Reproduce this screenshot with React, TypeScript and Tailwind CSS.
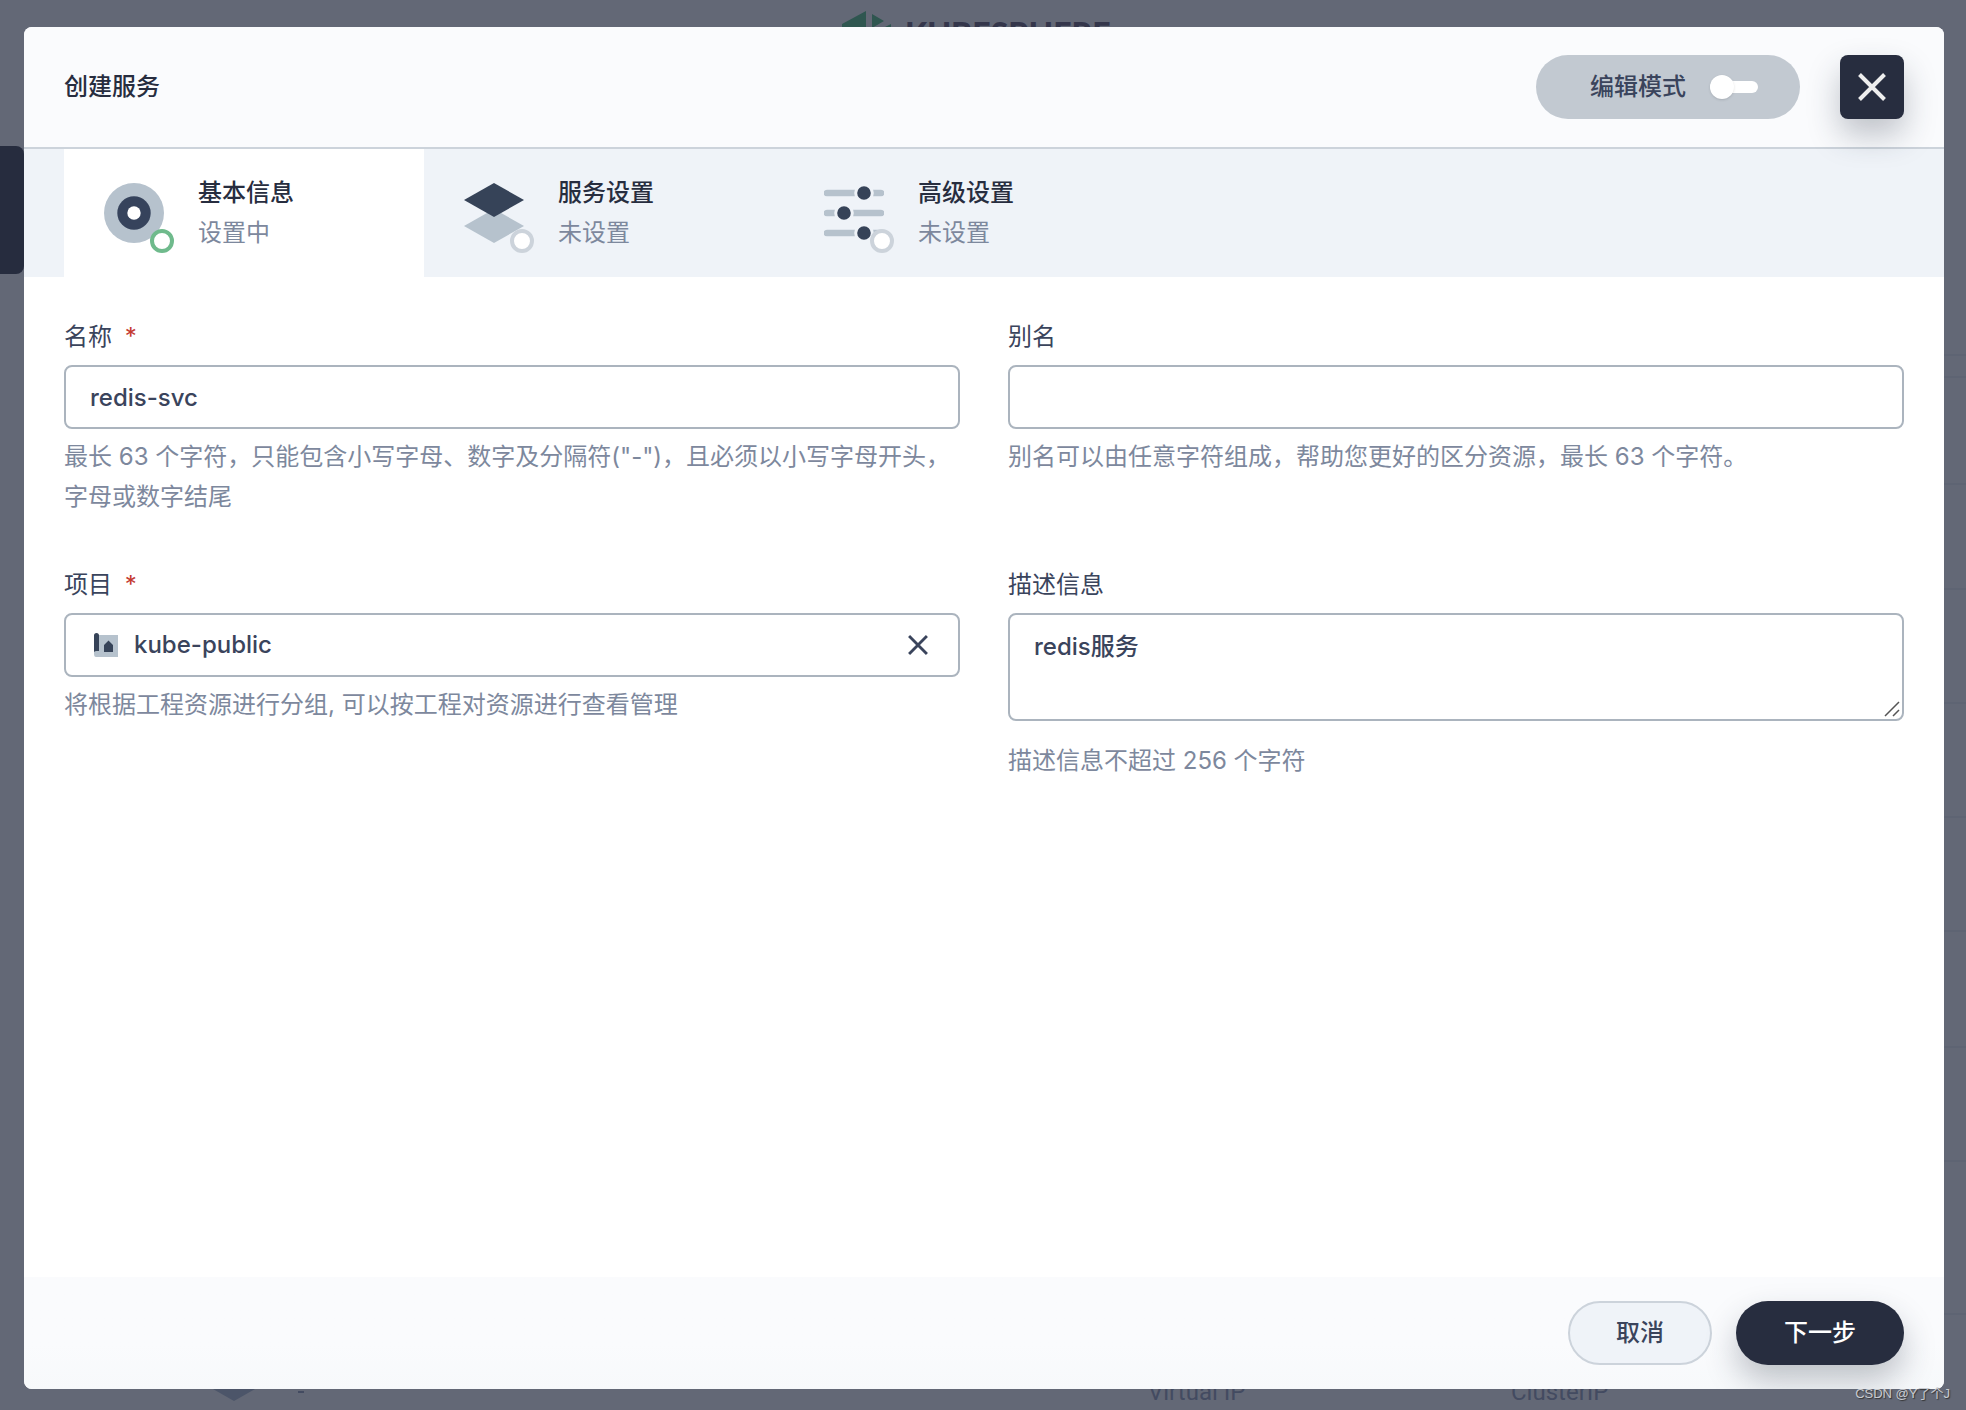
import { useState } from "react";

const steps = [
  { id: "basic", title: "基本信息", status: "设置中" },
  { id: "service", title: "服务设置", status: "未设置" },
  { id: "advanced", title: "高级设置", status: "未设置" },
];

const rows = [354, 376, 483, 588, 702, 816, 930, 1046, 1160, 1313];

function StepIcon({ id }: { id: string }) {
  if (id === "basic") {
    return (
      <svg viewBox="0 0 60 60" className="size-15">
        <circle cx="30" cy="30" r="30" fill="#b6c2cd" />
        <circle cx="30" cy="30" r="16.7" fill="#36435c" />
        <circle cx="30" cy="30" r="6.7" fill="#fff" />
      </svg>
    );
  }
  if (id === "service") {
    return (
      <svg viewBox="0 0 60 60" className="size-15">
        <path d="M30 26 60 43 30 60 0 43z" fill="#b6c2cd" />
        <path d="M30 0 60 17 30 34 0 17z" fill="#364358" />
      </svg>
    );
  }
  return (
    <svg viewBox="0 0 60 60" className="size-15">
      <path
        d="M3 10H57M3 30H57M3 50H57"
        stroke="#b6c2cd"
        strokeWidth="6.6"
        strokeLinecap="round"
      />
      <g fill="#364358" stroke="#eff3f8" strokeWidth="3">
        <circle cx="40" cy="10" r="8.3" />
        <circle cx="20" cy="30" r="8.3" />
        <circle cx="40" cy="50" r="8.3" />
      </g>
    </svg>
  );
}

function CloseIcon({ className }: { className: string }) {
  return (
    <svg viewBox="0 0 28 28" className={className}>
      <path d="M1.5 1.5 26.5 26.5M26.5 1.5 1.5 26.5" stroke="currentColor" strokeWidth="4" />
    </svg>
  );
}

function Backdrop() {
  return (
    <div aria-hidden="true" className="absolute inset-0 overflow-hidden">
      {/* logo */}
      <svg viewBox="0 0 300 40" className="absolute top-0 left-[820px] h-10 w-[300px]">
        <path d="M22 24 46 11V40H22zM52 14 64 21 52 28zM65 27 71 24V40H62z" fill="#2f5650" />
      </svg>
      <p className="absolute top-[14px] left-[905px] font-['Lato'] text-[32px] font-black text-[#34364b]">
        KUBESPHERE
      </p>
      {rows.map((top) => (
        <div
          key={top}
          className="absolute right-0 h-0.5 w-6 bg-[#5e6473]"
          style={{ top }}
        />
      ))}
      <div className="absolute top-[146px] left-0 h-32 w-6 rounded-r-lg bg-[#262c3e]" />
      <svg viewBox="0 0 92 12" className="absolute bottom-[9px] left-[213px] h-3 w-[92px]">
        <path d="M0 0H42L21 12z" fill="#4c5569" />
        <path d="M85 3H91" stroke="#434b61" strokeWidth="2" />
      </svg>
      <p className="absolute bottom-0.5 left-[1148px] font-['Roboto'] text-2xl leading-8 text-[#434b61]">
        Virtual IP
      </p>
      <p className="absolute bottom-0.5 left-[1511px] font-['Roboto'] text-2xl leading-8 text-[#434b61]">
        ClusterIP
      </p>
    </div>
  );
}

export default function App() {
  const [formData, setFormData] = useState({
    name: "redis-svc",
    alias: "",
    project: "kube-public",
    description: "redis服务",
  });
  const [editMode, setEditMode] = useState(false);
  const [current, setCurrent] = useState("basic");

  const handleChange = (
    e: React.ChangeEvent<HTMLInputElement | HTMLTextAreaElement>
  ) => {
    setFormData({
      ...formData,
      [e.target.name]: e.target.value,
    });
  };

  const handleSubmit = (e: React.FormEvent) => {
    e.preventDefault();
  };

  return (
    <div
      lang="zh-CN"
      className="relative flex min-h-screen flex-col bg-[#636876] pt-[27px] pr-[22px] pb-[21px] pl-6 font-['Inter','Noto_Sans_CJK_SC',sans-serif] text-2xl leading-10 text-[#3a445c]"
    >
      <Backdrop />

      <form
        onSubmit={handleSubmit}
        className="relative flex flex-1 flex-col overflow-hidden rounded-lg bg-white"
      >
        {/* Header */}
        <header className="flex items-center justify-between border-b-2 border-[#ccd3db] bg-[#fafbfd] px-10 py-7">
          <h1 className="font-medium text-[#272d3f]">创建服务</h1>
          <div className="flex items-center gap-10">
            <label className="flex h-16 cursor-pointer items-center gap-6 rounded-full bg-[#c2c9d1] pr-[42px] pl-[54px] font-medium">
              编辑模式
              <input
                type="checkbox"
                role="switch"
                checked={editMode}
                onChange={(e) => setEditMode(e.target.checked)}
                className="peer sr-only"
              />
              <span className="flex h-3 w-12 items-center rounded-full bg-white peer-checked:justify-end">
                <span className="size-6 rounded-full bg-white shadow" />
              </span>
            </label>
            <button
              type="button"
              aria-label="关闭"
              className="relative flex size-16 items-center justify-center rounded-lg bg-[#272d3f] text-[#eeeeee] shadow-[0_16px_32px_rgba(36,46,66,0.28)]"
            >
              <CloseIcon className="size-7" />
            </button>
          </div>
        </header>

        {/* Steps */}
        <nav className="flex bg-[#eff3f8] px-10">
          {steps.map((step) => (
            <button
              key={step.id}
              type="button"
              onClick={() => setCurrent(step.id)}
              className={`flex w-[360px] items-center gap-[34px] px-10 py-6 text-left ${
                current === step.id ? "bg-white" : ""
              }`}
            >
              <span className="relative">
                <StepIcon id={step.id} />
                <span
                  className={`absolute -right-2.5 -bottom-2.5 size-6 rounded-full border-4 bg-white ${
                    current === step.id ? "border-[#6fba8c]" : "border-[#ccd3db]"
                  }`}
                />
              </span>
              <span>
                <span className="block font-medium text-[#272d3f]">{step.title}</span>
                <span className="block text-[#7d889d]">{step.status}</span>
              </span>
            </button>
          ))}
        </nav>

        {/* Fields */}
        <div className="grid flex-1 grid-cols-2 content-start gap-12 p-10">
          <div>
            <label htmlFor="name" className="mb-2 block">
              名称 <span className="ml-1.5 text-[#c43a31]">*</span>
            </label>
            <input
              id="name"
              type="text"
              name="name"
              value={formData.name}
              onChange={handleChange}
              className="block h-16 w-full rounded-lg border-2 border-[#abb4be] px-6 font-medium outline-none"
            />
            <p className="mt-2 text-[#7d889d]">
              最长 63 个字符，只能包含小写字母、数字及分隔符("-")，且必须以小写字母开头，字母或数字结尾
            </p>
          </div>

          <div>
            <label htmlFor="alias" className="mb-2 block">
              别名
            </label>
            <input
              id="alias"
              type="text"
              name="alias"
              value={formData.alias}
              onChange={handleChange}
              className="block h-16 w-full rounded-lg border-2 border-[#abb4be] px-6 font-medium outline-none"
            />
            <p className="mt-2 text-[#7d889d]">
              别名可以由任意字符组成，帮助您更好的区分资源，最长 63 个字符。
            </p>
          </div>

          <div>
            <label htmlFor="project" className="mb-2 block">
              项目 <span className="ml-1.5 text-[#c43a31]">*</span>
            </label>
            <div className="flex h-16 items-center rounded-lg border-2 border-[#abb4be] pr-[30px] pl-7">
              <svg viewBox="0 0 24 24" className="size-6 shrink-0">
                <path d="M0 2H24V24H2Q0 24 0 21z" fill="#b6c2cd" />
                <path d="M0 2.5Q0 0 2.5 0T5 2.5V18H2.5Q1 18 0 19zM10 12 14.5 7.5 19 12V19H10z" fill="#364358" />
              </svg>
              <input
                id="project"
                type="text"
                name="project"
                value={formData.project}
                onChange={handleChange}
                className="min-w-0 flex-1 px-4 font-medium outline-none"
              />
              <button
                type="button"
                aria-label="清除"
                onClick={() => setFormData({ ...formData, project: "" })}
              >
                <CloseIcon className="size-5" />
              </button>
            </div>
            <p className="mt-2 text-[#7d889d]">
              将根据工程资源进行分组, 可以按工程对资源进行查看管理
            </p>
          </div>

          <div>
            <label htmlFor="description" className="mb-2 block">
              描述信息
            </label>
            <div className="relative">
              <textarea
                id="description"
                name="description"
                value={formData.description}
                onChange={handleChange}
                className="block h-[108px] w-full resize-none rounded-lg border-2 border-[#abb4be] px-6 py-3 font-medium outline-none"
              />
              <svg viewBox="0 0 16 16" className="pointer-events-none absolute right-1 bottom-1 size-4">
                <path d="M1 15 15 1M9 15 15 9" stroke="#555" strokeWidth="1.5" />
              </svg>
            </div>
            <p className="mt-5 text-[#7d889d]">描述信息不超过 256 个字符</p>
          </div>
        </div>

        {/* Footer */}
        <footer className="flex justify-end gap-6 bg-linear-to-b from-[#fafbfd] from-60% to-[#f7f9fb] px-10 py-6">
          <button
            type="button"
            className="h-16 rounded-full border-2 border-[#ccd3db] bg-[#eff3f8] px-[46px] font-medium"
          >
            取消
          </button>
          <button
            type="submit"
            className="h-16 rounded-full bg-[#272d3f] px-12 font-medium text-white shadow-[0_16px_32px_rgba(36,46,66,0.28)]"
          >
            下一步
          </button>
        </footer>
      </form>

      <p className="absolute right-4 bottom-1.5 font-['Liberation_Sans','Noto_Sans_CJK_SC',sans-serif] text-[13px] leading-5 text-[#c9cbd0] [text-shadow:1px_1px_1px_#333]">
        CSDN @Y了个J
      </p>
    </div>
  );
}
